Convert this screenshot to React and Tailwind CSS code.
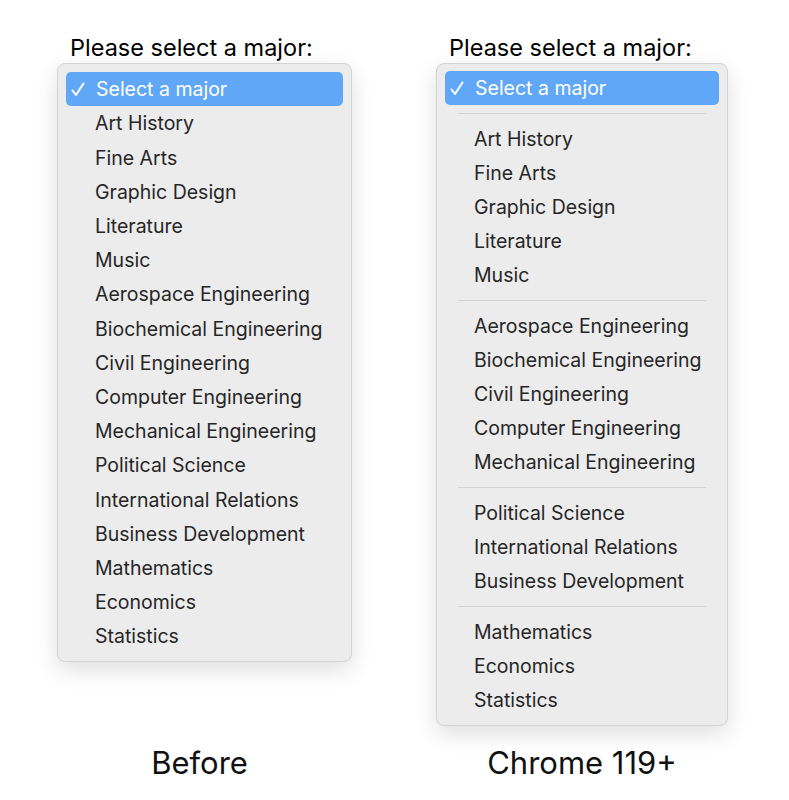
const groups = [
  ['Art History', 'Fine Arts', 'Graphic Design', 'Literature', 'Music'],
  ['Aerospace Engineering', 'Biochemical Engineering', 'Civil Engineering', 'Computer Engineering', 'Mechanical Engineering'],
  ['Political Science', 'International Relations', 'Business Development'],
  ['Mathematics', 'Economics', 'Statistics'],
];

const font = { fontFamily: 'Inter, "Liberation Sans", sans-serif' };

function Selected() {
  return (
    <div className="mx-[8px] flex h-[34px] items-center rounded-[5px] bg-[#60a8f7] pl-[5px] pt-[1px] text-[19.5px] text-white">
      <span className="flex w-[25px] items-center">
        <svg width="14" height="15" viewBox="0 0 14 15" fill="none" stroke="white" strokeWidth="2" strokeLinecap="round" strokeLinejoin="round">
          <path d="M1.5 8.5 L5 13 L12.5 1.5" />
        </svg>
      </span>
      <span>Select a major</span>
    </div>
  );
}

function Row({ label, h }) {
  return (
    <div className={`flex ${h} items-center pl-[37px] pt-[2px] text-[19.5px] text-[#262626]`}>{label}</div>
  );
}

function Label() {
  return <div className="h-[29px] pl-[13px] text-[23.5px] leading-[28px] text-black">Please select a major:</div>;
}

export default function App() {
  return (
    <div className="h-[800px] w-[789px] overflow-hidden bg-white" style={font}>
      <div className="flex items-start pt-[34px]">
        {/* Before */}
        <div className="ml-[57px] w-[295px]">
          <Label />
          <div className="rounded-[8px] border border-[#d3d3d3] bg-[#ececec] pb-[8px] pt-[8px] shadow-[0_8px_22px_rgba(0,0,0,0.13)]">
            <Selected />
            {groups.flat().map((g) => (
              <Row key={g} label={g} h="h-[34.19px]" />
            ))}
          </div>
        </div>

        {/* Chrome 119+ */}
        <div className="ml-[84px] w-[292px]">
          <Label />
          <div className="rounded-[8px] border border-[#d3d3d3] bg-[#ececec] pb-[8px] pt-[7px] shadow-[0_8px_22px_rgba(0,0,0,0.13)]">
            <Selected />
            {groups.map((grp) => (
              <div key={grp[0]}>
                <div className="flex h-[17px] items-center px-[21px]">
                  <div className="h-px w-full bg-[#d2d2d2]" />
                </div>
                {grp.map((g) => (
                  <Row key={g} label={g} h="h-[34px]" />
                ))}
              </div>
            ))}
          </div>
        </div>
      </div>

      <div className="mt-[19px] flex text-[31px] leading-[36px] text-[#111]">
        <div className="ml-[52px] w-[295px] text-center">Before</div>
        <div className="ml-[89px] w-[292px] text-center">Chrome 119+</div>
      </div>
    </div>
  );
}
